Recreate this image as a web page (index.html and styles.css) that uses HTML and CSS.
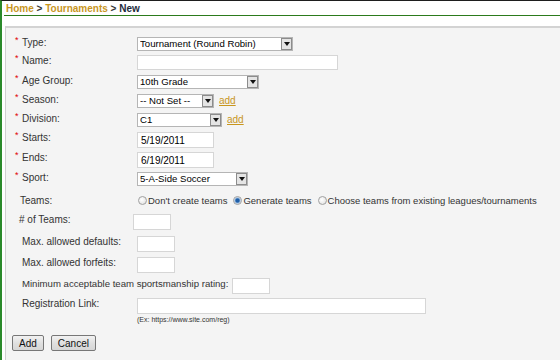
FILE: index.html
```html
<!DOCTYPE html>
<html lang="en">
<head>
  <meta charset="UTF-8" />
  <title>New Tournament</title>
  <link rel="stylesheet" href="styles.css">
</head>
<body>
  <div class="page">
    <header class="crumbs">
      <a href="#">Home</a> &gt; <a href="#">Tournaments</a> &gt; <span class="current">New</span>
    </header>

    <main class="panel">
      <form class="entry-form">
        <div class="row short">
          <label class="lbl req"><i>*</i>Type:</label>
          <span class="dd w-type"><select><option>Tournament (Round Robin)</option></select><span class="dd-btn"><svg width="6" height="4" viewBox="0 0 6 4"><path d="M0 0h6L3 4z" fill="#111"/></svg></span></span>
        </div>
        <div class="row tall">
          <label class="lbl req"><i>*</i>Name:</label>
          <input class="txt w-name" type="text">
        </div>
        <div class="row">
          <label class="lbl req"><i>*</i>Age Group:</label>
          <span class="dd w-age"><select><option>10th Grade</option></select><span class="dd-btn"><svg width="6" height="4" viewBox="0 0 6 4"><path d="M0 0h6L3 4z" fill="#111"/></svg></span></span>
        </div>
        <div class="row">
          <label class="lbl req"><i>*</i>Season:</label>
          <span class="dd w-season"><select><option>-- Not Set --</option></select><span class="dd-btn"><svg width="6" height="4" viewBox="0 0 6 4"><path d="M0 0h6L3 4z" fill="#111"/></svg></span></span>
          <a class="add" href="#">add</a>
        </div>
        <div class="row">
          <label class="lbl req"><i>*</i>Division:</label>
          <span class="dd w-div"><select><option>C1</option></select><span class="dd-btn"><svg width="6" height="4" viewBox="0 0 6 4"><path d="M0 0h6L3 4z" fill="#111"/></svg></span></span>
          <a class="add" href="#">add</a>
        </div>
        <div class="row tall">
          <label class="lbl req"><i>*</i>Starts:</label>
          <input class="txt w-date" type="text" value="5/19/2011">
        </div>
        <div class="row tall">
          <label class="lbl req"><i>*</i>Ends:</label>
          <input class="txt w-date" type="text" value="6/19/2011">
        </div>
        <div class="row tall">
          <label class="lbl req"><i>*</i>Sport:</label>
          <span class="dd w-sport"><select><option>5-A-Side Soccer</option></select><span class="dd-btn"><svg width="6" height="4" viewBox="0 0 6 4"><path d="M0 0h6L3 4z" fill="#111"/></svg></span></span>
        </div>
        <div class="row teams">
          <label class="lbl lbl-teams">Teams:</label>
          <div class="radios">
            <label class="opt"><input type="radio" name="teams">Don't create teams</label>
            <label class="opt"><input type="radio" name="teams" checked>Generate teams</label>
            <label class="opt"><input type="radio" name="teams">Choose teams from existing leagues/tournaments</label>
          </div>
        </div>
        <div class="row wider">
          <label class="lbl lbl-count"># of Teams:</label>
          <input class="txt w-small" type="text">
        </div>
        <div class="row wide">
          <label class="lbl lbl-opt">Max. allowed defaults:</label>
          <input class="txt w-small" type="text">
        </div>
        <div class="row wide">
          <label class="lbl lbl-opt">Max. allowed forfeits:</label>
          <input class="txt w-small" type="text">
        </div>
        <div class="row tall">
          <label class="lbl lbl-auto">Minimum acceptable team sportsmanship rating:</label>
          <input class="txt w-small" type="text">
        </div>
        <div class="row tall">
          <label class="lbl lbl-opt">Registration Link:</label>
          <div class="link-field">
            <input class="txt w-link" type="text">
            <small class="hint">(Ex: https://www.site.com/reg)</small>
          </div>
        </div>
        <div class="actions">
          <button type="submit">Add</button>
          <button type="button">Cancel</button>
        </div>
      </form>
    </main>
  </div>
</body>
</html>
```

FILE: styles.css
```css
body {
  margin: 0;
  font-family: 'Liberation Sans', Arial, sans-serif;
  font-size: 10px;
  color: #333;
  background: #fff;
}
.page {
  border-top: 1px solid #1e1e1e;
  border-left: 2px solid #2b8a2b;
  height: 359px;
  display: flex;
  flex-direction: column;
}
.crumbs {
  margin-left: 2px;
  padding: 2px 0 0 2px;
  height: 12px;
  border-bottom: 1px solid #2c7b1c;
  font-weight: bold;
  font-size: 10px;
  line-height: 12px;
  color: #333;
}
.crumbs a {
  color: #c8961e;
  text-decoration: none;
}
.crumbs .current {
  color: #1d2b3a;
}
.panel {
  flex: 1;
  margin: 10px 0 0 3px;
  border-top: 2px solid #d3d3d3;
  border-left: 1px solid #d0d0d0;
  background: #f4f4f4;
  padding-top: 9px;
}
.row {
  display: flex;
  align-items: flex-start;
  height: 19px;
  white-space: nowrap;
}
.row.short { height: 18px; }
.row.tall { height: 20px; }
.row.wide { height: 21px; }
.row.wider { height: 22px; }
.row.teams {
  height: 19px;
  margin-top: 3px;
}
.lbl {
  box-sizing: border-box;
  flex: none;
  width: 131px;
  padding-left: 9px;
  line-height: 13px;
  margin-top: -1px;
  color: #333;
}
.lbl i {
  display: inline-block;
  width: 7px;
  font-style: normal;
  color: #e00000;
  font-size: 9px;
  vertical-align: top;
  line-height: 9px;
}
.lbl-teams {
  padding-left: 14px;
}
.lbl-count {
  width: 127px;
  padding-left: 13px;
}
.lbl-opt {
  padding-left: 16px;
}
.lbl-auto {
  width: auto;
  padding-left: 16px;
  margin-right: 4px;
  font-size: 9.6px;
}
.txt {
  box-sizing: border-box;
  height: 16px;
  margin: 0;
  padding: 0 3px;
  border: 1px solid #d6d6d6;
  background: #fff;
  font-family: inherit;
  font-size: 10px;
  color: #000;
  outline: none;
}
.w-name { width: 201px; height: 15px; }
.w-date { width: 77px; }
.w-small { width: 38px; }
.w-link { width: 289px; }
.dd {
  box-sizing: border-box;
  display: inline-flex;
  align-items: center;
  height: 14px;
  border: 1px solid #b5b5b5;
  background: #fff;
}
.dd select {
  flex: 1;
  min-width: 0;
  appearance: none;
  -webkit-appearance: none;
  border: none;
  background: transparent;
  padding: 0 0 0 2px;
  margin: 0;
  height: 12px;
  font-family: inherit;
  font-size: 9.6px;
  line-height: 12px;
  color: #000;
  outline: none;
}
.dd-btn {
  box-sizing: border-box;
  width: 11px;
  height: 12px;
  display: flex;
  align-items: center;
  justify-content: center;
  background: #e4e4e4;
  border: 1px solid #8c8c8c;
}
.w-type { width: 156px; }
.w-age { width: 122px; }
.w-season { width: 77px; }
.w-div { width: 85px; }
.w-sport { width: 111px; }
.add {
  margin-left: 5px;
  color: #c8961e;
  line-height: 13px;
}
.radios {
  display: flex;
  gap: 6px;
  margin-left: 1px;
  margin-top: -1px;
  font-size: 9.5px;
}
.opt {
  display: flex;
  align-items: center;
  line-height: 13px;
}
.opt input {
  appearance: none;
  -webkit-appearance: none;
  width: 9px;
  height: 9px;
  margin: 0 1px 0 0;
  border: 1px solid #a0a0a0;
  border-radius: 50%;
  background: radial-gradient(circle at 40% 40%, #fff 0, #e3e3e3 80%);
}
.opt input:checked {
  background: radial-gradient(circle, #1f5fa8 0 1.6px, #8fb4dc 2.6px, #e8eef4 3.5px);
}
.link-field {
  display: flex;
  flex-direction: column;
}
.hint {
  margin-top: 2px;
  font-size: 7px;
  line-height: 8px;
  color: #333;
}
.actions {
  display: flex;
  gap: 7px;
  margin: 17px 0 0 6px;
}
button {
  box-sizing: border-box;
  height: 16px;
  padding: 0 6px;
  font-family: inherit;
  font-size: 10px;
  color: #111;
  border: 1px solid #777;
  border-radius: 2px;
  background: linear-gradient(#f2f2f2, #e0e0e0 50%, #d6d6d6);
  cursor: pointer;
}
```
